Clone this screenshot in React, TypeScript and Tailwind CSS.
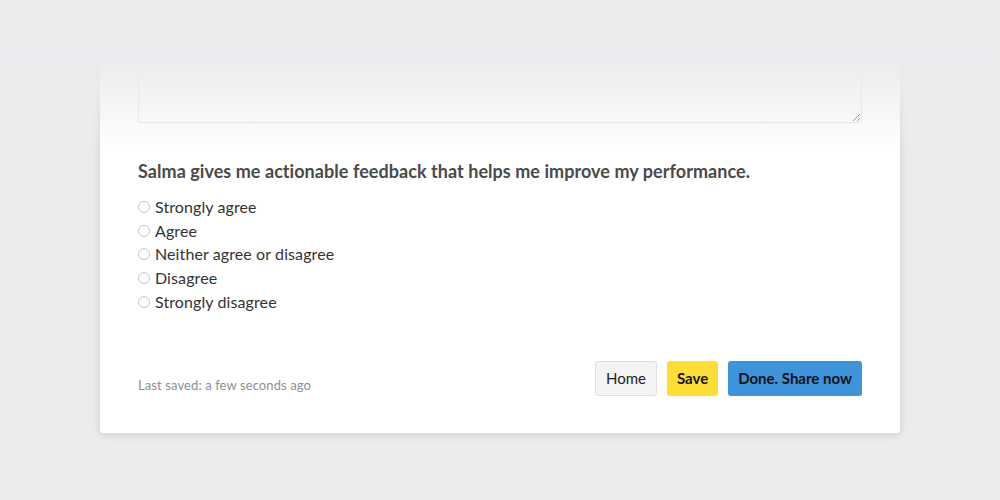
import { useState } from 'react'

const options = [
  'Strongly agree',
  'Agree',
  'Neither agree or disagree',
  'Disagree',
  'Strongly disagree',
]

export default function App() {
  const [choice, setChoice] = useState<string | null>(null)

  return (
    <div
      className="relative h-[500px] w-[1000px] overflow-hidden bg-[#ebecee]"
      style={{ fontFamily: 'Lato, "Noto Sans", sans-serif' }}
    >
      <div className="pt-[20px] px-[100px]">
        <div className="rounded-b-[3px] bg-white px-[38px] pb-[37px] shadow-[0_2px_8px_rgba(0,0,0,0.12)]">
          {/* Previous comment box, cut off at the top */}
          <textarea
            className="block h-[103px] w-[724px] resize-y rounded-[3px] border border-[#e3e4e6] bg-white outline-none"
            readOnly
          />

          <h3 className="mt-[36px] text-[18px] font-bold leading-[24px] tracking-[0.05px] text-[#4a4a4a]">
            Salma gives me actionable feedback that helps me improve my performance.
          </h3>

          <div className="mt-[12px] flex flex-col">
            {options.map((opt) => (
              <label key={opt} className="flex h-[23.75px] cursor-pointer items-center gap-[5px]">
                <input
                  type="radio"
                  name="feedback"
                  checked={choice === opt}
                  onChange={() => setChoice(opt)}
                  className="h-[12px] w-[12px] appearance-none rounded-full border border-[#c4c6ca] bg-white checked:border-[4px] checked:border-[#3b93dc]"
                />
                <span className="text-[16px] tracking-[0.1px] text-[#333]">{opt}</span>
              </label>
            ))}
          </div>

          <div className="mt-[47px] flex items-end justify-between">
            <span className="text-[13px] tracking-[0.1px] text-[#8c8f94]">Last saved: a few seconds ago</span>
            <div className="flex gap-[10px]">
              <button className="h-[35px] rounded-[3px] border border-[#e0e0e0] bg-[#f4f4f4] px-[10px] text-[15px] text-[#222]">
                Home
              </button>
              <button className="h-[35px] rounded-[3px] bg-[#fedd35] px-[10px] text-[15px] font-bold text-[#111]">
                Save
              </button>
              <button className="h-[35px] rounded-[3px] bg-[#3e94da] px-[10px] text-[15px] font-bold text-[#111]">
                Done. Share now
              </button>
            </div>
          </div>
        </div>
      </div>

      {/* fade over the top of the card */}
      <div className="pointer-events-none absolute inset-x-0 top-0 h-[152px] bg-gradient-to-b from-[#ebecee] from-[40%] to-[#ebecee]/0" />
    </div>
  )
}
